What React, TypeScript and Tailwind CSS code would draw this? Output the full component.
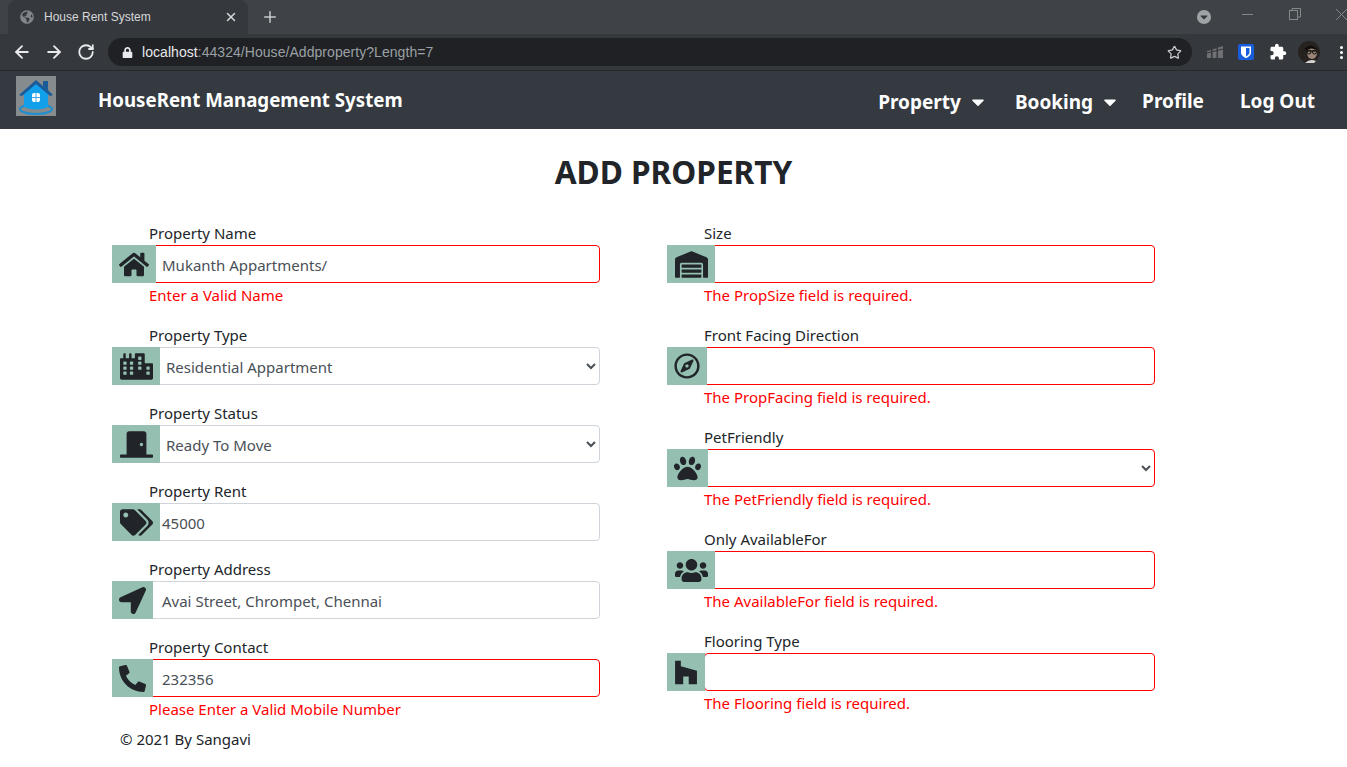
import React from "react";
import { ArrowLeft, ArrowRight, RotateCw, Plus, X, Star } from "lucide-react";
import {
  FaHome, FaCity, FaDoorClosed, FaTags, FaLocationArrow, FaPhoneAlt, FaWarehouse,
  FaRegCompass, FaPaw, FaUsers, FaHouzz, FaLock, FaGlobeAmericas, FaCaretDown,
} from "react-icons/fa";
import { MdExtension } from "react-icons/md";

const FONT = "[font-family:'Noto_Sans','Open_Sans',sans-serif]";

type F = {
  label: string;
  Icon: React.ComponentType<{ className?: string }>;
  iconClass: string;
  boxClass: string;
  padClass: string;
  value?: string;
  select?: boolean;
  invalid?: boolean;
  error?: string;
  roundClass?: string;
};

const left: F[] = [
  { label: "Property Name", Icon: FaHome, iconClass: "w-[30px] h-[27px]", boxClass: "w-[44px]", padClass: "pl-[6px]", value: "Mukanth Appartments/", invalid: true, error: "Enter a Valid Name" },
  { label: "Property Type", Icon: FaCity, iconClass: "w-[33px] h-[27px]", boxClass: "w-[48px]", padClass: "pl-[2px]", value: "Residential Appartment", select: true },
  { label: "Property Status", Icon: FaDoorClosed, iconClass: "w-[33px] h-[27px]", boxClass: "w-[48px]", padClass: "pl-[2px]", value: "Ready To Move", select: true },
  { label: "Property Rent", Icon: FaTags, iconClass: "w-[33px] h-[27px]", boxClass: "w-[48px]", padClass: "pl-[2px]", value: "45000" },
  { label: "Property Address", Icon: FaLocationArrow, iconClass: "w-[27px] h-[27px]", boxClass: "w-[41px]", padClass: "pl-[9px]", value: "Avai Street, Chrompet, Chennai" },
  { label: "Property Contact", Icon: FaPhoneAlt, iconClass: "w-[27px] h-[27px]", boxClass: "w-[41px]", padClass: "pl-[9px]", value: "232356", invalid: true, error: "Please Enter a Valid Mobile Number" },
];

const right: F[] = [
  { label: "Size", Icon: FaWarehouse, iconClass: "w-[33px] h-[27px]", boxClass: "w-[48px]", padClass: "pl-2", value: "", invalid: true, error: "The PropSize field is required." },
  { label: "Front Facing Direction", Icon: FaRegCompass, iconClass: "w-[26px] h-[26px]", boxClass: "w-[40px]", padClass: "pl-2", value: "", invalid: true, error: "The PropFacing field is required." },
  { label: "PetFriendly", Icon: FaPaw, iconClass: "w-[27px] h-[27px]", boxClass: "w-[41px]", padClass: "pl-2", value: "", select: true, invalid: true, error: "The PetFriendly field is required." },
  { label: "Only AvailableFor", Icon: FaUsers, iconClass: "w-[33px] h-[27px]", boxClass: "w-[48px]", padClass: "pl-2", value: "", invalid: true, error: "The AvailableFor field is required." },
  { label: "Flooring Type", Icon: FaHouzz, iconClass: "w-[24px] h-[27px]", boxClass: "w-[38px]", padClass: "pl-2", value: "", invalid: true, error: "The Flooring field is required.", roundClass: "rounded" },
];

function Field({ f }: { f: F }) {
  const border = f.invalid ? "border-[#ff0000]" : "border-[#ced4da]";
  const round = f.roundClass ?? "rounded-r";
  return (
    <div className="flex flex-col">
      <label className="h-6 pl-[37px] text-[15px] leading-6 text-[#212529]">{f.label}</label>
      <div className="flex h-[38px] items-stretch">
        <div className={`${f.boxClass} relative z-10 -mr-px flex shrink-0 items-center justify-center bg-[#95bfb1] text-[#212529]`}>
          <f.Icon className={f.iconClass} />
        </div>
        {f.select ? (
          <select
            defaultValue={f.value}
            className={`h-[38px] min-w-0 flex-1 ${round} border bg-white ${border} ${f.padClass} pt-[2px] text-[15px] text-[#495057] [appearance:auto]`}
          >
            <option value={f.value}>{f.value}</option>
          </select>
        ) : (
          <input
            readOnly
            value={f.value}
            className={`h-[38px] min-w-0 flex-1 ${round} border bg-white ${border} ${f.padClass} pt-[2px] text-[15px] text-[#495057] outline-none`}
          />
        )}
      </div>
      {f.error && <span className="h-6 pl-[37px] text-[15px] leading-6 text-[#ff0000]">{f.error}</span>}
    </div>
  );
}

function Logo() {
  return (
    <svg viewBox="0 0 40 40" className="h-10 w-10 shrink-0">
      <rect width="40" height="40" fill="#868b8d" />
      <ellipse cx="20" cy="33" rx="16" ry="5" fill="none" stroke="#1d8fd0" strokeWidth="2" />
      <path d="M8 17 L20 7 L32 17 V31 Q20 36 8 31 Z" fill="#12a0ea" />
      <path d="M3 19 L20 4 L27 10 V5 H32 V14 L37 19 L34 20 L20 8 L6 20 Z" fill="#1b5b98" />
      <rect x="16" y="17" width="8" height="9" rx="2" fill="#fff" />
      <path d="M20 17 V26 M16 21.5 H24" stroke="#3fa9e8" strokeWidth="1" />
    </svg>
  );
}

function Bitwarden() {
  return (
    <svg viewBox="0 0 16 16" className="h-4 w-4">
      <rect width="16" height="16" rx="2" fill="#175ddc" />
      <path d="M3 2.5 H13 V8.5 C13 11.5 10 13.2 8 14.2 C6 13.2 3 11.5 3 8.5 Z" fill="#fff" />
      <path d="M8 4 H11.5 V8.5 C11.5 10.4 9.6 11.6 8 12.5 Z" fill="#175ddc" />
    </svg>
  );
}

function Metrics() {
  return (
    <svg viewBox="0 0 16 12" className="h-3 w-4">
      <path d="M0 5 L4 4 V12 H0 Z M5.5 3.5 L9.5 2 V12 H5.5 Z M11 1.5 L16 0 V12 H11 Z" fill="#6e7073" />
      <path d="M0 7 L16 3" stroke="#35363a" strokeWidth="1" />
    </svg>
  );
}

function Avatar() {
  return (
    <svg viewBox="0 0 22 22" className="h-[22px] w-[22px]">
      <circle cx="11" cy="11" r="11" fill="#26221f" />
      <ellipse cx="14" cy="12" rx="5" ry="6" fill="#9c8477" />
      <path d="M6 8 Q13 1 20 9 L19 9 Q13 6 9 9 Z" fill="#0f0d0c" />
      <path d="M8 10 H19" stroke="#111" strokeWidth="1.2" />
      <circle cx="11" cy="11" r="2" fill="none" stroke="#111" />
      <circle cx="16.5" cy="11" r="2" fill="none" stroke="#111" />
      <path d="M7 22 Q12 17 18 20 L16 22 Z" fill="#d8d4d0" />
    </svg>
  );
}

function NavItem({ text, caret }: { text: string; caret?: boolean }) {
  return (
    <span className={`flex items-center text-[19px] font-bold leading-none text-white ${caret ? "translate-y-[1px]" : ""}`}>
      {text}
      {caret && <FaCaretDown className="ml-[9px] h-5 w-[16px]" />}
    </span>
  );
}

export default function App() {
  return (
    <div className={`${FONT} h-[767px] w-[1347px] overflow-hidden bg-white`}>
      {/* tab strip */}
      <div className="flex h-[34px] items-end bg-[#3f4347] pl-2">
        <div className="flex h-[34px] w-[240px] items-center rounded-t-lg bg-[#35383d] pl-3 pr-[10px]">
          <FaGlobeAmericas className="h-[14px] w-[14px] text-[#80868b]" />
          <span className="ml-[10px] flex-1 text-[12px] text-[#d5d7d9] [font-family:'Liberation_Sans',sans-serif]">House Rent System</span>
          <X className="h-[14px] w-[14px] text-[#d5d7d9]" strokeWidth={2.5} />
        </div>
        <div className="flex h-[34px] w-[44px] items-center justify-center">
          <Plus className="h-[18px] w-[18px] text-[#c8cacc]" strokeWidth={2} />
        </div>
        <div className="ml-auto flex h-[34px] items-center">
          <div className="flex h-[14px] w-[14px] items-center justify-center rounded-full bg-[#a0a3a6]">
            <FaCaretDown className="h-3 w-3 text-[#35383d]" />
          </div>
          <div className="mb-[6px] flex items-center">
            <svg viewBox="0 0 11 1" className="ml-[31px] h-px w-[11px] text-[#85888b]" fill="none" stroke="currentColor">
              <path d="M0 0.5 H11" />
            </svg>
            <svg viewBox="0 0 12 12" className="ml-[36px] h-3 w-3 text-[#85888b]" fill="none" stroke="currentColor">
              <rect x="0.5" y="2.5" width="8" height="9" />
              <path d="M3 2.5 V0.5 H11.5 V9 H8.5" />
            </svg>
            <svg viewBox="0 0 11 11" className="ml-[35px] h-[11px] w-[11px] text-[#85888b]" fill="none" stroke="currentColor">
              <path d="M0 0 L11 11 M11 0 L0 11" />
            </svg>
          </div>
        </div>
      </div>
      {/* toolbar */}
      <div className="flex h-[36px] items-center bg-[#35383d] pl-3 pr-[3px]">
        <ArrowLeft className="h-5 w-5 text-[#e8eaed]" strokeWidth={2.2} />
        <ArrowRight className="ml-[12px] h-5 w-5 text-[#e8eaed]" strokeWidth={2.2} />
        <RotateCw className="ml-[13px] h-[18px] w-[18px] text-[#e8eaed]" strokeWidth={2.4} />
        <div className="ml-[13px] flex h-[28px] w-[1084px] items-center rounded-full bg-[#202124] pl-[14px] pr-[10px]">
          <FaLock className="h-[11px] w-[11px] text-[#e8eaed]" />
          <span className="ml-[9px] flex-1 text-[14px] tracking-[0.05px] text-[#9aa0a6] [font-family:'Liberation_Sans',sans-serif]">
            <span className="text-[#e8eaed]">localhost</span>:44324/House/Addproperty?Length=7
          </span>
          <Star className="h-[15px] w-[15px] text-[#c8cacc]" strokeWidth={2} />
        </div>
        <div className="ml-[15px] flex items-center">
          <Metrics />
          <div className="ml-[15px]"><Bitwarden /></div>
          <MdExtension className="ml-[15px] h-[18px] w-[18px] text-white" />
          <div className="ml-[11px]"><Avatar /></div>
          <div className="ml-[20px] flex flex-col gap-[2px]">
            <span className="h-[3px] w-[3px] rounded-full bg-white" />
            <span className="h-[3px] w-[3px] rounded-full bg-white" />
            <span className="h-[3px] w-[3px] rounded-full bg-white" />
          </div>
        </div>
      </div>
      {/* navbar */}
      <nav className="flex h-[59px] items-start border-t border-[#27292c] bg-[#343a40] pl-4 pr-[32px]">
        <div className="mt-[5px]"><Logo /></div>
        <span className="ml-[42px] mt-[15px] text-[18.7px] font-bold leading-[28px] text-white">HouseRent Management System</span>
        <div className="ml-auto mt-[20px] flex items-center">
          <NavItem text="Property" caret />
          <span className="ml-[29px]"><NavItem text="Booking" caret /></span>
          <span className="ml-[24px]"><NavItem text="Profile" /></span>
          <span className="ml-[36px]"><NavItem text="Log Out" /></span>
        </div>
      </nav>
      {/* main */}
      <main className="px-[112px]">
        <h1 className="pt-[24px] pb-[30px] text-center text-[31.6px] font-bold leading-[38px] text-[#212529]">ADD PROPERTY</h1>
        <div className="grid grid-cols-[488px_488px] gap-x-[67px]">
          <div className="flex flex-col gap-4">
            {left.map((f) => <Field key={f.label} f={f} />)}
          </div>
          <div className="flex flex-col gap-4">
            {right.map((f) => <Field key={f.label} f={f} />)}
          </div>
        </div>
        <footer className="mt-[6px] pl-2 text-[15px] leading-6 text-[#212529]">© 2021 By Sangavi</footer>
      </main>
    </div>
  );
}
